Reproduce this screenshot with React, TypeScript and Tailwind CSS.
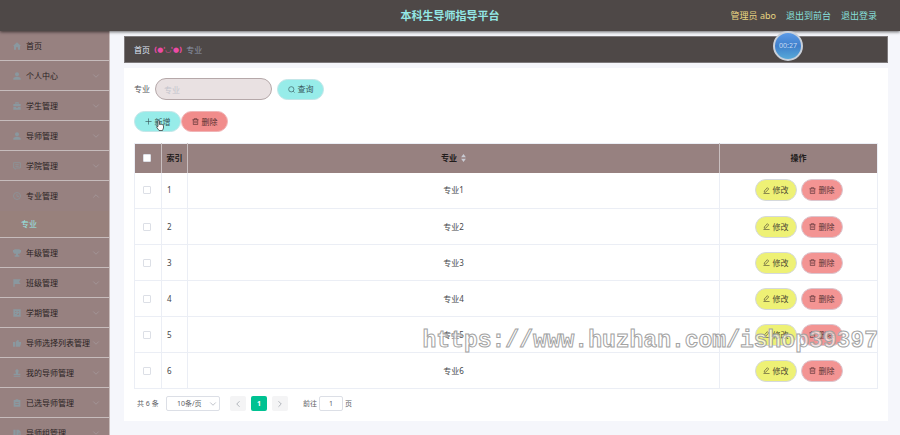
import type { ReactNode } from "react";
import { ChevronDown, ChevronLeft, ChevronRight, ChevronUp } from "lucide-react";

const menuIcons: Record<string, ReactNode> = {
  home: <path d="M12 1 0 12h3v11h6v-7h6v7h6V12h3z" />,
  user: (
    <>
      <circle cx="12" cy="7" r="6" />
      <path d="M8 14h8l7 4v5H1v-5z" />
    </>
  ),
  bag: (
    <path
      fillRule="evenodd"
      d="M7 6V1h10v5h6v7H1V6zm3 0h4V4h-4zM1 15h8v2h6v-2h8v8H1z"
    />
  ),
  chat: (
    <path
      d="M2 2h20v16H11l-5 4v-4H2zM7 8h10M7 13h10"
      fill="none"
      stroke="currentColor"
      strokeWidth="2"
    />
  ),
  clock: (
    <path
      d="M12 1.500a10.500 10.500 0 1 0 0 21a10.500 10.500 0 1 0 0-21M12 6v7h6"
      fill="none"
      stroke="currentColor"
      strokeWidth="2"
    />
  ),
  trophy: <path d="M4 1h16v2h4v6l-4 5h-5v5h4v4H5v-4h4v-5H4L0 9V3h4z" />,
  flag: <path d="M1 1h22l-5 7 5 7H5v8H1z" />,
  calendar: (
    <path
      fillRule="evenodd"
      d="M1 1h22v22H1zm5 5v2h4V6zm8 0v2h4V6zM6 13v2h4v-2zm6 5h6v-6h-2v4h-4z"
    />
  ),
  hand: <path d="M0 9h6v14H0zM8 9l6-7 4 3-1 4h7v5l-3 9H8z" />,
  stamp: <path d="M12 1a5 5 0 0 1 4 8l-1 5h7v5H2v-5h7L8 9a5 5 0 0 1 4-8zM2 21h20v2H2z" />,
  clipboard: (
    <path
      fillRule="evenodd"
      d="M2 3h6V1h8v2h6v20H2zm5 6v2h10V9zm0 6v2h10v-2z"
    />
  ),
  files: <path d="M1 2h7v21H1zM10 2h7l6 6v3h-6v12h-7zM19 13h4v10h-4z" />,
};

const menu = [
  { label: "首页", icon: "home" },
  { label: "个人中心", icon: "user" },
  { label: "学生管理", icon: "bag" },
  { label: "导师管理", icon: "user" },
  { label: "学院管理", icon: "chat" },
  { label: "专业管理", icon: "clock", children: ["专业"] },
  { label: "年级管理", icon: "trophy" },
  { label: "班级管理", icon: "flag" },
  { label: "学期管理", icon: "calendar" },
  { label: "导师选择列表管理", icon: "hand" },
  { label: "我的导师管理", icon: "stamp" },
  { label: "已选导师管理", icon: "clipboard" },
  { label: "导师组管理", icon: "files" },
];

const rows = [1, 2, 3, 4, 5, 6].map((id) => ({ id, name: `专业${id}` }));

function LineIcon({ d }: { d: string }) {
  return (
    <svg
      viewBox="0 0 16 16"
      className="size-[7px] shrink-0"
      fill="none"
      stroke="currentColor"
      strokeWidth="1.500"
      aria-hidden="true"
    >
      <path d={d} />
    </svg>
  );
}

const SearchIcon = () => <LineIcon d="M7.500 1.500a6 6 0 1 0 0 12a6 6 0 1 0 0-12M12 12l3 3" />;
const PlusIcon = () => <LineIcon d="M8 1v14M1 8h14" />;
const TrashIcon = () => (
  <LineIcon d="M1 4h14M5 4V1.500h6V4M3 4v11h10V4M6.500 7v5M9.500 7v5" />
);
const EditIcon = () => <LineIcon d="M3 9l7-7.500 3 3L6 12H3zM1 15h14" />;

function Sidebar() {
  return (
    <nav className="w-[110px] shrink-0 overflow-hidden border-r border-[#c9bdbd] bg-[#978180]">
      <ul>
        {menu.map((item) => (
          <li key={item.label} className="border-b border-[#c6bcbc]">
            <button
              type="button"
              className={
                item.children
                  ? "flex h-[30px] w-full items-center pr-2 pl-[13px] text-left"
                  : "flex h-[29px] w-full items-center pr-2 pl-[13px] text-left"
              }
            >
              <svg
                viewBox="0 0 24 24"
                className="mr-[5px] size-2 shrink-0 text-[#8a989f]"
                fill="currentColor"
                aria-hidden="true"
              >
                {menuIcons[item.icon]}
              </svg>
              <span className="flex-1 whitespace-nowrap text-[#2a2222]">{item.label}</span>
              {item.icon !== "home" &&
                (item.children ? (
                  <ChevronUp className="size-2.5 text-[#a5989a]" />
                ) : (
                  <ChevronDown className="size-2.5 text-[#a5989a]" />
                ))}
            </button>
            {item.children?.map((child) => (
              <a
                key={child}
                href="#major"
                className="flex h-[26px] items-center bg-[#98817c] pl-[21px] text-[#95e9e6]"
              >
                {child}
              </a>
            ))}
          </li>
        ))}
      </ul>
    </nav>
  );
}

function Pagination() {
  return (
    <div className="flex h-[15px] items-center pl-[3px] text-[7px] text-[#606266]">
      <span className="w-[29px]">共 6 条</span>
      <div className="relative h-full w-[54px]">
        <select
          aria-label="每页条数"
          className="h-full w-full appearance-none rounded-xs border border-[#dcdfe6] bg-white pl-[10px]"
        >
          <option>10条/页</option>
        </select>
        <ChevronDown className="pointer-events-none absolute top-[3px] right-0.5 size-2.5 text-[#b4b8c0]" />
      </div>
      <button
        type="button"
        aria-label="上一页"
        className="ml-[10px] flex h-full w-4 items-center justify-center rounded-xs bg-[#f4f4f5] text-[#a4a8b0]"
      >
        <ChevronLeft className="size-2.5" />
      </button>
      <button
        type="button"
        className="ml-[5px] h-full w-4 rounded-xs bg-[#00c292] text-center font-bold text-white"
      >
        1
      </button>
      <button
        type="button"
        aria-label="下一页"
        className="ml-[5px] flex h-full w-4 items-center justify-center rounded-xs bg-[#f4f4f5] text-[#a4a8b0]"
      >
        <ChevronRight className="size-2.5" />
      </button>
      <label className="ml-[15px] flex h-full items-center gap-0.5">
        前往
        <input
          defaultValue="1"
          className="h-full w-6 rounded-xs border border-[#dcdfe6] text-center"
        />
        页
      </label>
    </div>
  );
}

function MajorTable() {
  const checkbox = "block size-2 appearance-none rounded-[1px] border border-[#dcdfe6] bg-white";
  return (
    <table className="w-full table-fixed border-collapse border border-[#ebeef5] text-[#45474b]">
      <thead>
        <tr className="h-[29px] bg-[#978180] text-[#221c1c]">
          <th className="w-[27px] border-r border-[#c9bfc0] pl-2">
            <input type="checkbox" aria-label="全选" className={checkbox} />
          </th>
          <th className="w-[26px] border-r border-[#c9bfc0]">索引</th>
          <th className="border-r border-[#c9bfc0]">
            <span className="inline-flex items-center gap-1">
              专业
              <svg
                viewBox="0 0 6 10"
                className="h-2 w-[5px]"
                fill="#c9ccd4"
                role="img"
                aria-label="排序"
              >
                <path d="M3 0l3 4H0zM3 10L0 6h6z" />
              </svg>
            </span>
          </th>
          <th className="w-[158px]">操作</th>
        </tr>
      </thead>
      <tbody>
        {rows.map((row) => (
          <tr key={row.id} className="h-9 border-b border-[#ebeef5]">
            <td className="border-r border-[#ebeef5] pl-2">
              <input type="checkbox" aria-label={`选择${row.name}`} className={checkbox} />
            </td>
            <td className="border-r border-[#ebeef5] pl-[5px]">{row.id}</td>
            <td className="border-r border-[#ebeef5] text-center">{row.name}</td>
            <td>
              <div className="flex justify-center gap-1">
                <button
                  type="button"
                  className="flex h-[22px] w-[42px] items-center justify-center gap-[3px] rounded-full border border-[#d5d9dc] bg-[#eef175] text-[#4f4a35]"
                >
                  <EditIcon />
                  修改
                </button>
                <button
                  type="button"
                  className="flex h-[22px] w-[42px] items-center justify-center gap-[3px] rounded-full border border-[#dcc6cf] bg-[#f39493] text-[#5b3438]"
                >
                  <TrashIcon />
                  删除
                </button>
              </div>
            </td>
          </tr>
        ))}
      </tbody>
    </table>
  );
}

export default function App() {
  return (
    <div className="relative flex h-screen flex-col overflow-hidden bg-[#f5f6fb] font-['Noto_Sans','Noto_Sans_CJK_SC',sans-serif] text-[8px] leading-3">
      <header className="z-10 grid h-[31px] shrink-0 grid-cols-[1fr_auto_1fr] items-center bg-[#4e4847] pr-[23px] shadow-[0_1px_3px_rgba(0,0,0,0.6)]">
        <h1 className="col-start-2 pl-[23px] text-[11px] font-bold text-[#93e7e5]">
          本科生导师指导平台
        </h1>
        <div className="flex justify-end gap-2.5 text-[9px] text-[#87e0dc]">
          <span className="text-[#e9d582]">管理员 abo</span>
          <a href="#front">退出到前台</a>
          <a href="#logout">退出登录</a>
        </div>
      </header>

      <div className="flex min-h-0 flex-1">
        <Sidebar />
        <main className="flex min-w-0 flex-1 flex-col gap-[5px] pt-[5px] pr-3 pl-[14px]">
          <div className="flex h-[27px] shrink-0 items-center gap-1 border border-[#7d797b] bg-[#4e4847] pl-[9px]">
            <a href="#home" className="text-[#dfe6f5]">
              首页
            </a>
            <span className="font-['DejaVu_Sans',sans-serif] text-[7px] font-bold text-[#ee4ba6]">
              (●'◡'●)
            </span>
            <span className="text-[#8c95a8]">专业</span>
          </div>

          <section className="bg-white px-[10px] pt-[10px] pb-[10px]">
            <form className="flex h-[22px] items-center">
              <label htmlFor="major" className="w-[21px] text-[#55565a]">
                专业
              </label>
              <input
                id="major"
                placeholder="专业"
                className="h-[22px] w-[117px] rounded-full border border-[#b5a8a9] bg-[#e9e1e2] px-2 placeholder:text-[#c3c4cd]"
              />
              <button
                type="button"
                className="ml-[5px] flex h-[21px] w-[47px] items-center justify-center gap-[3px] rounded-full border border-[#c3e6e8] bg-[#97ece9] text-[#37585b]"
              >
                <SearchIcon />
                查询
              </button>
            </form>

            <div className="mt-[11px] flex">
              <div className="relative">
                <button
                  type="button"
                  className="flex h-[21px] w-[47px] items-center justify-center gap-[3px] rounded-full border border-[#c3e6e8] bg-[#97ece9] text-[#37585b]"
                >
                  <PlusIcon />
                  新增
                </button>
                <svg
                  viewBox="0 0 16 22"
                  className="pointer-events-none absolute top-[9px] left-[22px] h-[11px] w-2"
                  fill="white"
                  stroke="#333"
                  strokeWidth="1.500"
                  aria-hidden="true"
                >
                  <path d="M4 13V3q0-2 1.500-2T7 3v6q1-1.500 2.500 0q1.500-1 2.500 .5q2-.5 3 1.500v5l-2 5H6l-5-7q0-2 3-1z" />
                </svg>
              </div>
              <button
                type="button"
                className="flex h-[21px] w-[47px] items-center justify-center gap-[3px] rounded-full border border-[#f0b4b6] bg-[#f18c8b] text-[#572f31]"
              >
                <TrashIcon />
                删除
              </button>
            </div>

            <div className="mt-[11px] mb-[7px]">
              <MajorTable />
            </div>
            <Pagination />
          </section>
        </main>
      </div>

      {/* recording timer */}
      <div className="absolute top-[31px] right-[97px] z-20 flex size-[30px] items-center justify-center rounded-full border-2 border-[#c9d0da] bg-linear-to-b from-[#5c9be8] via-[#3f7fcb] to-[#58a9d8] text-[7px] text-[#c8dcf5]">
        00:27
      </div>

      {/* watermark */}
      <div className="pointer-events-none absolute right-[22px] bottom-20 z-20 font-['Liberation_Mono',monospace] text-[23px] leading-7 font-bold whitespace-nowrap text-white/60 [-webkit-text-stroke:1px_#a3a3a3]">
        https://www.huzhan.com/ishop39397
      </div>
    </div>
  );
}
